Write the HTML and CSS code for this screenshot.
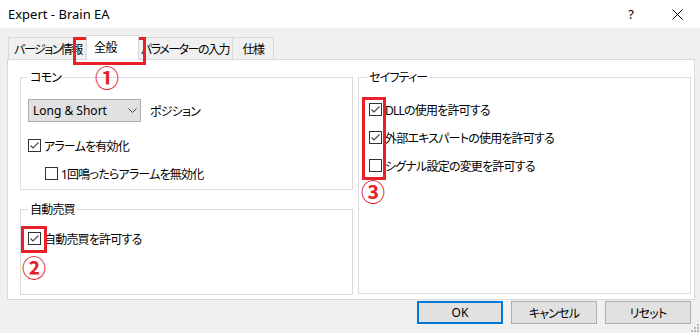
FILE: index.html
```html
<!DOCTYPE html>
<html lang="ja">
<head>
<meta charset="utf-8">
<title>Expert - Brain EA</title>
<link rel="stylesheet" href="styles.css">
</head>
<body>
<header class="titlebar">
  <span class="title latin">Expert - Brain EA</span>
  <span class="caption-btn help latin">?</span>
  <span class="caption-btn close">
    <svg width="11" height="11" viewBox="0 0 11 11"><path d="M0.5 0.5L10.5 10.5M10.5 0.5L0.5 10.5" stroke="#000" stroke-width="1" fill="none"/></svg>
  </span>
</header>

<nav class="tabs">
  <div class="tab tab-version">バージョン情報</div>
  <div class="tab tab-general active">全般</div>
  <div class="tab tab-params">パラメーターの入力</div>
  <div class="tab tab-spec">仕様</div>
</nav>

<main class="panel">
  <div class="col-left">
    <fieldset class="group g-common">
      <legend>コモン</legend>
      <div class="select-row">
        <div class="select">
          <span class="latin">Long &amp; Short</span>
          <svg width="9" height="5" viewBox="0 0 9 5"><path d="M0.5 0.5L4.5 4.5L8.5 0.5" stroke="#444" stroke-width="1" fill="none"/></svg>
        </div>
        <span>ポジション</span>
      </div>
      <div class="check first">
        <span class="box"><svg width="11" height="11" viewBox="0 0 11 11"><path d="M1.5 5.5L4 8L9.5 2.5" stroke="#444" stroke-width="1.1" fill="none"/></svg></span>
        <span>アラームを有効化</span>
      </div>
      <div class="check indent">
        <span class="box"></span>
        <span>1回鳴ったらアラームを無効化</span>
      </div>
    </fieldset>

    <fieldset class="group g-auto">
      <legend>自動売買</legend>
      <div class="check auto">
        <span class="box"><svg width="11" height="11" viewBox="0 0 11 11"><path d="M1.5 5.5L4 8L9.5 2.5" stroke="#444" stroke-width="1.1" fill="none"/></svg></span>
        <span>自動売買を許可する</span>
      </div>
    </fieldset>
  </div>

  <fieldset class="group g-safety">
    <legend>セイフティー</legend>
    <div class="check first">
      <span class="box"><svg width="11" height="11" viewBox="0 0 11 11"><path d="M1.5 5.5L4 8L9.5 2.5" stroke="#444" stroke-width="1.1" fill="none"/></svg></span>
      <span>DLLの使用を許可する</span>
    </div>
    <div class="check">
      <span class="box"><svg width="11" height="11" viewBox="0 0 11 11"><path d="M1.5 5.5L4 8L9.5 2.5" stroke="#444" stroke-width="1.1" fill="none"/></svg></span>
      <span>外部エキスパートの使用を許可する</span>
    </div>
    <div class="check">
      <span class="box"></span>
      <span>シグナル設定の変更を許可する</span>
    </div>
  </fieldset>
</main>

<footer class="buttons">
  <div class="btn default latin">OK</div>
  <div class="btn">キャンセル</div>
  <div class="btn">リセット</div>
</footer>

<svg class="grip" width="10" height="10" viewBox="0 0 10 10">
  <rect x="7" y="1" width="2" height="2" fill="#b8b8b8"/>
  <rect x="4" y="4" width="2" height="2" fill="#b8b8b8"/>
  <rect x="7" y="4" width="2" height="2" fill="#b8b8b8"/>
  <rect x="1" y="7" width="2" height="2" fill="#b8b8b8"/>
  <rect x="4" y="7" width="2" height="2" fill="#b8b8b8"/>
  <rect x="7" y="7" width="2" height="2" fill="#b8b8b8"/>
</svg>

<div class="mark mark-1"></div>
<div class="mark mark-2"></div>
<div class="mark mark-3"></div>
<span class="num num-1">①</span>
<span class="num num-2">②</span>
<span class="num num-3">③</span>
</body>
</html>
```

FILE: styles.css
```css
* {
  box-sizing: border-box;
}

html,
body {
  margin: 0;
}

body {
  position: relative;
  width: 700px;
  height: 333px;
  overflow: hidden;
  background: #f0f0f0;
  color: #000;
  font-family: "Noto Sans", "Noto Sans CJK JP", sans-serif;
  font-size: 12px;
  font-feature-settings: "palt";
  letter-spacing: -0.8px;
}

.latin {
  letter-spacing: 0;
}

/* title bar */
.titlebar {
  display: flex;
  align-items: center;
  height: 28px;
  background: #fff;
}

.title {
  flex: 1;
  padding-left: 8px;
  font-size: 13px;
}

.caption-btn {
  display: flex;
  align-items: center;
  justify-content: center;
  width: 46px;
  height: 28px;
}

.help {
  font-size: 13px;
}

.close svg {
  display: block;
}

/* tabs */
.tabs {
  display: flex;
  align-items: flex-end;
  height: 31px;
  padding-left: 8px;
}

.tab {
  display: flex;
  align-items: center;
  justify-content: center;
  flex: none;
  height: 22px;
  margin-left: -1px;
  border: 1px solid #d9d9d9;
  border-bottom: 0;
  background: #f0f0f0;
  white-space: nowrap;
  letter-spacing: -1.5px;
}

.tab-version {
  width: 80px;
  margin-left: 0;
}

.tab-general {
  width: 53px;
}

.tab-params {
  width: 96px;
}

.tab-spec {
  width: 42px;
}

.tab.active {
  position: relative;
  z-index: 1;
  height: 25px;
  margin: 0 -2px -1px -2px;
  padding: 0 14px 2px 0;
  background: #fff;
  letter-spacing: -0.5px;
}

.tab.active + .tab {
  margin-left: 0;
}

/* panel */
.panel {
  display: grid;
  grid-template-columns: 333px 333px;
  column-gap: 5px;
  align-items: start;
  width: 688px;
  height: 241px;
  margin-left: 7px;
  padding: 9px 3px 0 12px;
  border: 1px solid #d9d9d9;
  background: #fff;
}

.col-left {
  display: flex;
  flex-direction: column;
  gap: 11px;
}

.group {
  min-width: 0;
  margin: 0;
  padding: 0 0 0 7px;
  border: 1px solid #dcdcdc;
}

.group legend {
  padding: 0 2px;
  line-height: 17px;
}

.g-common {
  height: 121px;
}

.g-auto {
  height: 94px;
}

.g-safety {
  height: 225px;
  padding-left: 10px;
}

.g-safety legend {
  margin-left: -2px;
}

.select-row {
  display: flex;
  align-items: center;
  gap: 9px;
  margin-top: 13px;
}

.select {
  display: flex;
  align-items: center;
  justify-content: space-between;
  width: 113px;
  height: 23px;
  padding: 0 3px 0 4px;
  border: 1px solid #adadad;
  background: #e1e1e1;
}

.select svg {
  display: block;
}

.check {
  display: flex;
  align-items: center;
  gap: 3px;
  height: 27px;
  margin-top: 1px;
}

.check.first {
  margin-top: 10px;
}

.check.auto {
  margin-top: 7px;
}

.check.indent {
  padding-left: 17px;
}

.box {
  display: flex;
  align-items: center;
  justify-content: center;
  flex: none;
  width: 13px;
  height: 13px;
  border: 1px solid #333;
  background: #fff;
}

.box svg {
  display: block;
}

/* buttons */
.buttons {
  display: flex;
  justify-content: flex-end;
  gap: 8px;
  margin-top: 1px;
  padding-right: 9px;
}

.btn {
  display: flex;
  align-items: center;
  justify-content: center;
  width: 86px;
  height: 23px;
  border: 1px solid #adadad;
  background: #e1e1e1;
}

.btn.default {
  border: 2px solid #0078d7;
}

.grip {
  position: absolute;
  right: 0;
  bottom: 0;
}

/* annotations */
.mark {
  position: absolute;
  border: 3px solid #e8202a;
}

.mark-1 {
  left: 73px;
  top: 37px;
  width: 73px;
  height: 28px;
}

.mark-2 {
  left: 21px;
  top: 226px;
  width: 26px;
  height: 27px;
}

.mark-3 {
  left: 362px;
  top: 97px;
  width: 24px;
  height: 83px;
}

.num {
  position: absolute;
  color: #e8202a;
  font-family: "Noto Sans CJK JP", sans-serif;
  font-size: 24px;
  font-weight: 700;
  line-height: 24px;
  letter-spacing: 0;
}

.num-1 {
  left: 95px;
  top: 65px;
}

.num-2 {
  left: 22px;
  top: 255px;
}

.num-3 {
  left: 361px;
  top: 179px;
}
```
